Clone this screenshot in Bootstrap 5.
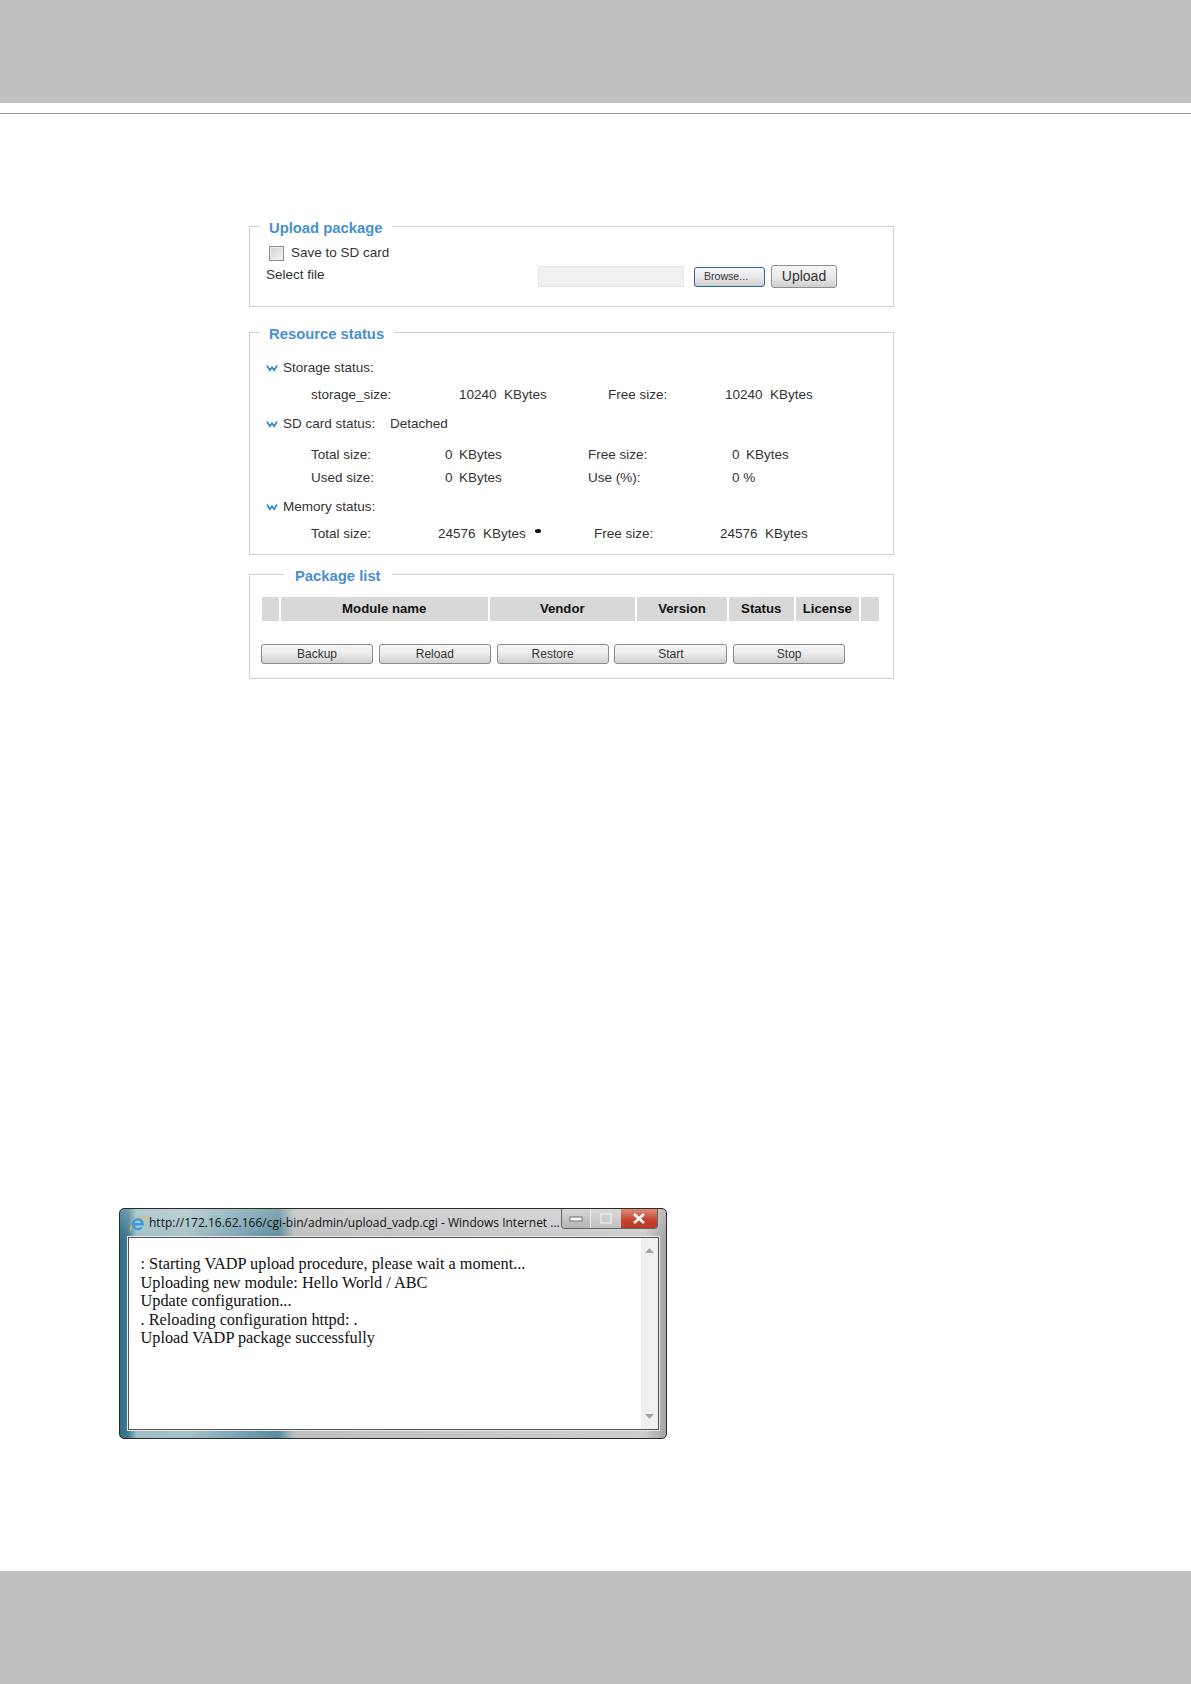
<!DOCTYPE html>
<html lang="en">
<head>
<meta charset="utf-8">
<title>Upload package</title>
<link href="https://cdn.jsdelivr.net/npm/bootstrap@5.3.0/dist/css/bootstrap.min.css" rel="stylesheet">
<style>
html,body{margin:0;background:#fff;}
body{width:1191px;height:1684px;font-family:"Liberation Sans",Arial,sans-serif;color:#333;font-size:13.5px;display:flex;flex-direction:column;}
.band-top{height:103px;background:#c0c0c0;flex:none;}
.rule-top{height:1px;background:#9a9a9a;margin-top:10px;flex:none;}
.panels{margin:102.5px 0 0 249px;width:645px;flex:none;}
fieldset.box{border:1px solid #cfcfcf;margin:0;position:relative;}
fieldset.box legend{float:none;width:auto;font-size:14.8px;font-weight:700;color:#4a8fd0;line-height:16px;padding:3px 10px 1px;margin:0 0 0 9px;}
#f1{height:90.5px;}
#f2{height:232.5px;margin-top:15.5px;}
#f3{height:114px;margin-top:9.5px;}
#f3 legend{margin-left:34px;padding:3px 11px 1px;}
#f3::before{content:"";position:absolute;left:3px;top:8px;width:6px;height:3px;background:#fff;}
.sd-row{display:flex;align-items:center;padding-left:19px;height:16px;margin-top:8.5px;}
.fake-check{width:15px;height:15px;border:1px solid #8e8e8e;background:linear-gradient(135deg,#d0d0d0,#f6f6f6);box-shadow:inset 0 0 0 1px #eee;margin-right:7px;}
.file-row{display:flex;align-items:center;height:22px;margin-top:4.5px;padding-left:16px;}
.file-label{width:272px;margin-top:-2px;}
.file-input{width:146px;height:21px;background:#f0f0f0;border:1px solid #e6e6e6;margin-right:10px;}
.win-btn{font-family:"Liberation Sans",Arial,sans-serif;color:#333;border-radius:3px;padding:0;background:linear-gradient(#f6f6f6,#ebebeb 50%,#cfcfcf);}
.browse-btn{width:71px;height:20px;border:1px solid #2b6a9a;font-size:10.6px;padding-right:7px;margin-right:6px;}
.upload-btn{width:66px;height:23px;border:1px solid #8f8f8f;font-size:14px;}
.stat-head{display:flex;align-items:center;height:16px;padding-left:16px;}
.chev{width:12px;height:8px;margin-right:5px;flex:none;}
.stat-row{display:flex;height:16px;align-items:center;white-space:pre;padding-left:61px;}
.c{flex:none;}
.mem-dot{width:6px;height:3.5px;border-radius:50%;background:#111;margin:-7px 53px 0 -2px;flex:none;}
.list-head{display:flex;gap:2px;height:24px;margin:12px 0 0 12px;font-weight:700;color:#111;font-size:13.2px;}
.list-head div{background:#d8d8d8;display:flex;align-items:center;justify-content:center;}
.action-row{display:flex;gap:5.8px;margin:23px 0 0 11px;}
.act-btn{width:112px;height:20px;border:1px solid #8a8a8a;font-size:12px;line-height:18px;}
.window-wrap{margin:529.500px 0 0 119px;flex:none;}
.ie-window{width:548px;height:231px;border:1px solid #2a2a2a;border-radius:5px;padding:0 7px 8px 8px;background:linear-gradient(rgba(255,255,255,.25),rgba(255,255,255,0) 30px),linear-gradient(90deg,#2f6f86 0,#3f7c90 1.500%,#9dbcc6 3%,#a9c2ca 12%,#6b9aaa 25%,#5a8c9d 29%,#c0c0c0 32%,#cdcdcd 96%,#a5a5a5 100%);display:flex;flex-direction:column;}
.ie-title{height:28px;display:flex;align-items:center;font-family:"Open Sans",sans-serif;font-size:12px;color:#111;white-space:nowrap;flex:none;}
.ie-title svg{margin:0 2px 0 1px;flex:none;}
.ie-title span{flex:1;}
.caption{display:flex;height:20px;align-self:flex-start;border:1px solid #666;border-top:0;border-radius:0 0 4px 4px;overflow:hidden;width:97px;flex:none;margin-right:1px;}
.caption div{display:flex;align-items:center;justify-content:center;}
.cap-min{width:29px;background:linear-gradient(#d8d8d8,#b4b4b4);border-right:1px solid #eee;}
.cap-max{width:30px;background:linear-gradient(#dadada,#c0c0c0);}
.cap-close{flex:1;background:linear-gradient(#e08a78,#c4432f 60%,#b93a28);}
.ie-body{flex:1;display:flex;background:#fff;border:1px solid #555;box-shadow:0 0 0 1px #e8e8e8;}
.ie-text{flex:1;padding:17px 12px 0 11.500px;font-family:"Liberation Serif","Times New Roman",serif;font-size:16.300px;line-height:18.550px;color:#111;}
.ie-scroll{width:17px;background:#f0f0f0;display:flex;flex-direction:column;justify-content:space-between;align-items:center;padding:10px 0;}
.spacer{flex:1;}
.band-bottom{height:113px;background:#c0c0c0;flex:none;}
</style>
</head>
<body>
<div class="band-top"></div>
<div class="rule-top"></div>

<div class="panels">
  <fieldset class="box" id="f1">
    <legend>Upload package</legend>
    <div class="sd-row"><span class="fake-check"></span><span>Save to SD card</span></div>
    <div class="file-row">
      <span class="file-label">Select file</span>
      <span class="file-input"></span>
      <button class="win-btn browse-btn" type="button">Browse...</button>
      <button class="win-btn upload-btn" type="button">Upload</button>
    </div>
  </fieldset>

  <fieldset class="box" id="f2">
    <legend>Resource status</legend>
    <div class="stat-head" style="margin-top:17.500px"><svg class="chev" viewBox="0 0 12 8"><polyline points="1,1.500 3.800,6.300 6,3.200 8.200,6.300 11,1.500" fill="none" stroke="#2f8fc4" stroke-width="1.700"/></svg><span>Storage status:</span></div>
    <div class="stat-row" style="margin-top:11px"><span class="c" style="width:148px">storage_size:</span><span class="c" style="width:45px">10240</span><span class="c" style="width:104px">KBytes</span><span class="c" style="width:117px">Free size:</span><span class="c" style="width:45px">10240</span><span class="c">KBytes</span></div>
    <div class="stat-head" style="margin-top:13px"><svg class="chev" viewBox="0 0 12 8"><polyline points="1,1.500 3.800,6.300 6,3.200 8.200,6.300 11,1.500" fill="none" stroke="#2f8fc4" stroke-width="1.700"/></svg><span style="width:107px">SD card status:</span><span>Detached</span></div>
    <div class="stat-row" style="margin-top:15.5px"><span class="c" style="width:134px">Total size:</span><span class="c" style="width:14px">0</span><span class="c" style="width:129px">KBytes</span><span class="c" style="width:144px">Free size:</span><span class="c" style="width:14px">0</span><span class="c">KBytes</span></div>
    <div class="stat-row" style="margin-top:6.5px"><span class="c" style="width:134px">Used size:</span><span class="c" style="width:14px">0</span><span class="c" style="width:129px">KBytes</span><span class="c" style="width:144px">Use (%):</span><span class="c">0 %</span></div>
    <div class="stat-head" style="margin-top:13px"><svg class="chev" viewBox="0 0 12 8"><polyline points="1,1.500 3.800,6.300 6,3.200 8.200,6.300 11,1.500" fill="none" stroke="#2f8fc4" stroke-width="1.700"/></svg><span>Memory status:</span></div>
    <div class="stat-row" style="margin-top:11.5px"><span class="c" style="width:127px">Total size:</span><span class="c" style="width:45px">24576</span><span class="c" style="width:54px">KBytes</span><span class="mem-dot"></span><span class="c" style="width:126px">Free size:</span><span class="c" style="width:45px">24576</span><span class="c">KBytes</span></div>
  </fieldset>

  <fieldset class="box" id="f3">
    <legend>Package list</legend>
    <div class="list-head">
      <div style="width:17px"></div><div style="width:206.500px">Module name</div><div style="width:145.500px">Vendor</div><div style="width:90px">Version</div><div style="width:64.500px">Status</div><div style="width:63.500px">License</div><div style="width:17.500px"></div>
    </div>
    <div class="action-row">
      <button class="win-btn act-btn" type="button">Backup</button>
      <button class="win-btn act-btn" type="button">Reload</button>
      <button class="win-btn act-btn" type="button">Restore</button>
      <button class="win-btn act-btn" type="button" style="width:113px">Start</button>
      <button class="win-btn act-btn" type="button">Stop</button>
    </div>
  </fieldset>
</div>

<div class="window-wrap">
  <div class="ie-window">
    <div class="ie-title">
      <svg width="18" height="18" viewBox="0 0 18 18"><path d="M1.500 16.500C.5 13 7 5 13.500 2.500c2.500-.9 3.800.3 3.200 2.200-.2.8-.6 1.500-1 2.200" fill="none" stroke="#e0bd5a" stroke-width="1.300"/><path d="M4.200 10.200H13.800A4.900 4.900 0 1 0 12.600 13.500" fill="none" stroke="#3a9ad9" stroke-width="2.400"/></svg>
      <span>http://172.16.62.166/cgi-bin/admin/upload_vadp.cgi - Windows Internet ...</span>
      <div class="caption">
        <div class="cap-min"><svg width="14" height="6" viewBox="0 0 14 6"><rect x="1" y="1" width="12" height="4" fill="#fff" stroke="#555" stroke-width=".8"/></svg></div>
        <div class="cap-max"><svg width="12" height="11" viewBox="0 0 12 11"><rect x="1" y="1" width="10" height="9" fill="none" stroke="#e8e8e8" stroke-width="1.500"/></svg></div>
        <div class="cap-close"><svg width="14" height="11" viewBox="0 0 14 11"><path d="M2 1l10 9M12 1L2 10" stroke="#fff" stroke-width="2.600"/></svg></div>
      </div>
    </div>
    <div class="ie-body">
      <div class="ie-text">: Starting VADP upload procedure, please wait a moment...<br>Uploading new module: Hello World / ABC<br>Update configuration...<br>. Reloading configuration httpd: .<br>Upload VADP package successfully</div>
      <div class="ie-scroll"><svg width="9" height="5" viewBox="0 0 9 5"><path d="M0 5l4.500-5 4.500 5z" fill="#a5a5a5"/></svg><svg width="9" height="5" viewBox="0 0 9 5"><path d="M0 0l4.500 5 4.500-5z" fill="#a5a5a5"/></svg></div>
    </div>
  </div>
</div>

<div class="spacer"></div>
<div class="band-bottom"></div>
</body>
</html>
